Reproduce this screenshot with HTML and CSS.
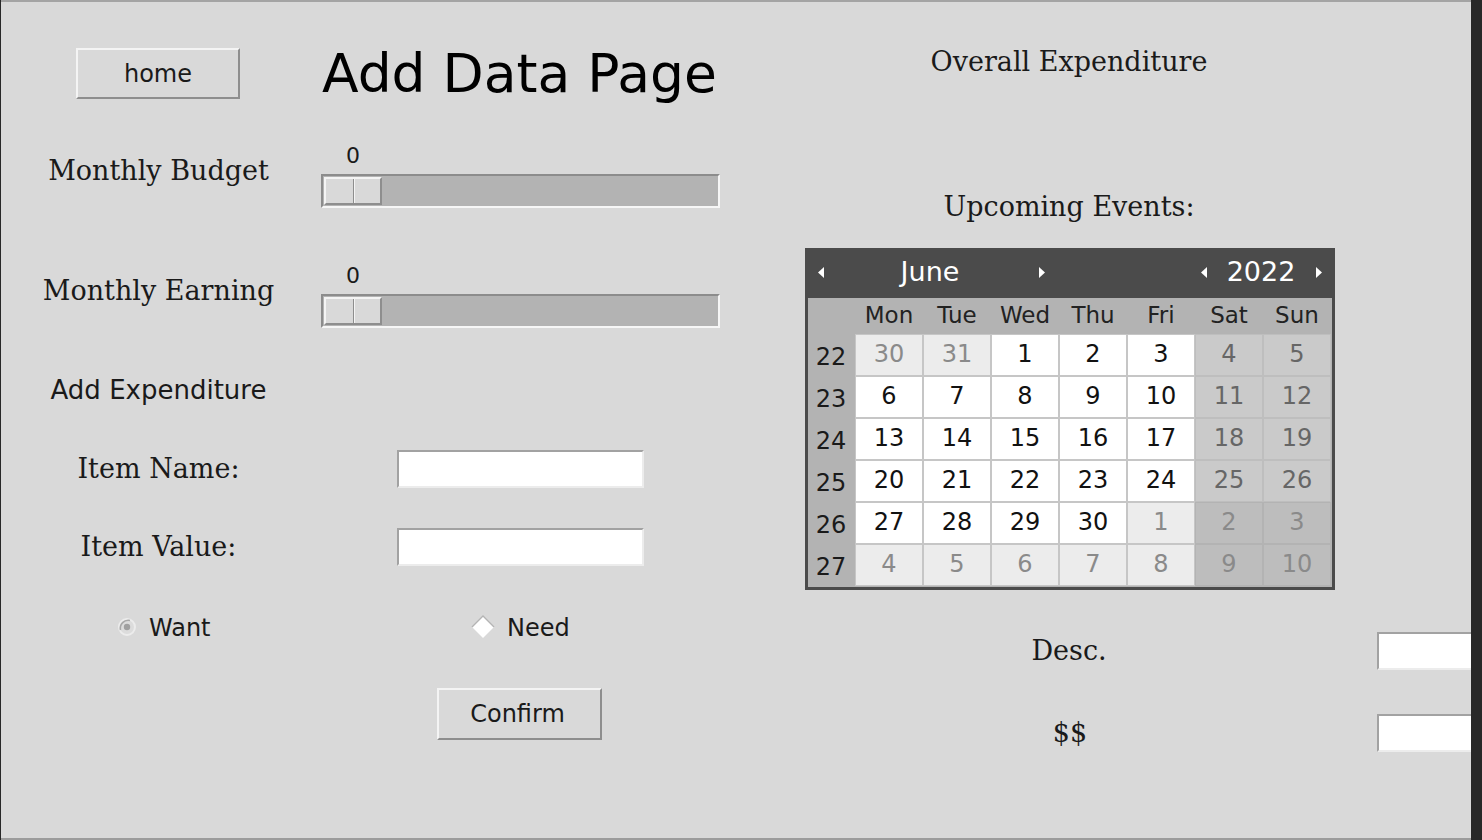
FILE: index.html
```html
<!DOCTYPE html>
<html>
<head>
<meta charset="utf-8">
<link rel="stylesheet" href="styles.css">
</head>
<body>
<div class="window">
  <div class="left">
    <div class="row row-top">
      <div class="btn btn-home">home</div>
      <div class="title">Add Data Page</div>
    </div>

    <div class="row row-slider first">
      <div class="label serif slab">Monthly Budget</div>
      <div class="scale">
        <div class="scale-value">0</div>
        <div class="trough"><div class="handle"></div></div>
      </div>
    </div>

    <div class="row row-slider second">
      <div class="label serif slab">Monthly Earning</div>
      <div class="scale">
        <div class="scale-value">0</div>
        <div class="trough"><div class="handle"></div></div>
      </div>
    </div>

    <div class="row row-heading">
      <div class="label sans heading">Add Expenditure</div>
    </div>

    <div class="row row-entry name">
      <div class="label serif">Item Name:</div>
      <div class="entry"></div>
    </div>

    <div class="row row-entry value">
      <div class="label serif">Item Value:</div>
      <div class="entry"></div>
    </div>

    <div class="row row-radio">
      <div class="radio want">
        <svg class="ind-circle" width="20" height="20" viewBox="0 0 20 20">
          <circle cx="10" cy="10" r="8" fill="#dcdcdc" stroke="#ececec" stroke-width="2"/>
          <path d="M3.5 13 A8 8 0 0 1 13 3.5" fill="none" stroke="#a8a8a8" stroke-width="1.6"/>
          <circle cx="10" cy="10" r="3.2" fill="#a0a0a0"/>
        </svg>
        <span>Want</span>
      </div>
      <div class="radio need">
        <svg class="ind-diamond" width="24" height="24" viewBox="0 0 24 24">
          <polygon points="12,1 23,12 12,23 1,12" fill="#ffffff"/>
          <polyline points="1,12 12,1 23,12" fill="none" stroke="#b4b4b4" stroke-width="1.4"/>
        </svg>
        <span>Need</span>
      </div>
    </div>

    <div class="row row-confirm">
      <div class="btn btn-confirm">Confirm</div>
    </div>
  </div>

  <div class="right">
    <div class="rlabel serif">Overall Expenditure</div>
    <div class="rlabel serif events">Upcoming Events:</div>

    <div class="calendar">
      <div class="cal-head">
        <div class="arr arr-a"><svg width="7" height="11" viewBox="0 0 7 11"><polygon points="7,0 7,11 1,5.5" fill="#fff"/></svg></div>
        <div class="cal-month">June</div>
        <div class="arr arr-b"><svg width="7" height="11" viewBox="0 0 7 11"><polygon points="0,0 0,11 6,5.5" fill="#fff"/></svg></div>
        <div class="cal-spacer"></div>
        <div class="arr arr-c"><svg width="7" height="11" viewBox="0 0 7 11"><polygon points="7,0 7,11 1,5.5" fill="#fff"/></svg></div>
        <div class="cal-year">2022</div>
        <div class="arr arr-d"><svg width="7" height="11" viewBox="0 0 7 11"><polygon points="0,0 0,11 6,5.5" fill="#fff"/></svg></div>
      </div>
      <div class="cal-grid">
        <div class="dn"></div>
        <div class="dn">Mon</div><div class="dn">Tue</div><div class="dn">Wed</div><div class="dn">Thu</div><div class="dn">Fri</div><div class="dn">Sat</div><div class="dn">Sun</div>

        <div class="wk">22</div>
        <div class="d om">30</div><div class="d om">31</div><div class="d">1</div><div class="d">2</div><div class="d">3</div><div class="d we">4</div><div class="d we">5</div>

        <div class="wk">23</div>
        <div class="d">6</div><div class="d">7</div><div class="d">8</div><div class="d">9</div><div class="d">10</div><div class="d we">11</div><div class="d we">12</div>

        <div class="wk">24</div>
        <div class="d">13</div><div class="d">14</div><div class="d">15</div><div class="d">16</div><div class="d">17</div><div class="d we">18</div><div class="d we">19</div>

        <div class="wk">25</div>
        <div class="d">20</div><div class="d">21</div><div class="d">22</div><div class="d">23</div><div class="d">24</div><div class="d we">25</div><div class="d we">26</div>

        <div class="wk">26</div>
        <div class="d">27</div><div class="d">28</div><div class="d">29</div><div class="d">30</div><div class="d om">1</div><div class="d owe">2</div><div class="d owe">3</div>

        <div class="wk">27</div>
        <div class="d om">4</div><div class="d om">5</div><div class="d om">6</div><div class="d om">7</div><div class="d om">8</div><div class="d owe">9</div><div class="d owe">10</div>
      </div>
    </div>

    <div class="rrow desc">
      <div class="rcell serif">Desc.</div>
      <div class="entry wide"></div>
    </div>
    <div class="rrow money">
      <div class="rcell serif">$$</div>
      <div class="entry wide"></div>
    </div>
  </div>
</div>
</body>
</html>
```

FILE: styles.css
```css
html, body {
  margin: 0;
  padding: 0;
  background: #282828;
  overflow: hidden;
}

.window {
  margin-left: 1px;
  width: 1470px;
  height: 836px;
  border-top: 2px solid #a4a4a4;
  border-bottom: 2px solid #9c9c9c;
  background: #d9d9d9;
  display: flex;
  overflow: hidden;
  color: #1a1a1a;
}

.serif { font-family: "DejaVu Serif", "Liberation Serif", serif; font-size: 27px; }
.sans { font-family: "DejaVu Sans", "Liberation Sans", sans-serif; }

/* ---------- left panel ---------- */
.left {
  width: 758px;
  flex-shrink: 0;
  padding-top: 46px;
  display: flex;
  flex-direction: column;
}

.row { display: flex; align-items: flex-start; }

.row-top { height: 51px; align-items: center; }

.btn {
  box-sizing: border-box;
  font-family: "DejaVu Sans", "Liberation Sans", sans-serif;
  font-size: 24px;
  color: #1a1a1a;
  background: #d9d9d9;
  border-top: 2px solid #f4f4f4;
  border-left: 2px solid #f4f4f4;
  border-bottom: 2px solid #8e8e8e;
  border-right: 2px solid #8e8e8e;
  display: flex;
  align-items: center;
  justify-content: center;
}

.btn-home { margin-left: 75px; width: 164px; height: 51px; }

.title {
  margin-left: 82px;
  font-family: "DejaVu Sans", "Liberation Sans", sans-serif;
  font-size: 53.5px;
  line-height: 51px;
  color: #000;
  white-space: nowrap;
}

.label {
  width: 315px;
  flex-shrink: 0;
  text-align: center;
  line-height: 28px;
  white-space: nowrap;
}

.row-slider.first { margin-top: 44px; }
.row-slider.second { margin-top: 55px; }
.row-slider .label { margin-top: 14px; }

.scale { margin-left: 5px; display: flex; flex-direction: column; }
.scale-value {
  width: 64px;
  text-align: center;
  font-family: "DejaVu Sans", "Liberation Sans", sans-serif;
  font-size: 22px;
  line-height: 24px;
  padding-top: 1px;
  height: 23px;
  color: #1a1a1a;
}
.trough {
  margin-top: 7px;
  box-sizing: border-box;
  width: 399px;
  height: 34px;
  background: #b3b3b3;
  border-top: 2px solid #8c8c8c;
  border-left: 2px solid #8c8c8c;
  border-bottom: 2px solid #f6f6f6;
  border-right: 2px solid #f6f6f6;
  padding: 1px;
}
.handle {
  box-sizing: border-box;
  width: 58px;
  height: 28px;
  background:
    linear-gradient(to right, transparent 27px, #8e8e8e 27px, #8e8e8e 28px, #f4f4f4 28px, #f4f4f4 29px, transparent 29px),
    #d9d9d9;
  border-top: 2px solid #f4f4f4;
  border-left: 2px solid #f4f4f4;
  border-bottom: 2px solid #8e8e8e;
  border-right: 2px solid #8e8e8e;
}

.row-heading { margin-top: 48px; }
.heading { font-size: 26px; }

.row-entry { height: 38px; align-items: center; }
.row-entry.name { margin-top: 46px; }
.row-entry.value { margin-top: 40px; }

.entry {
  box-sizing: border-box;
  margin-left: 81px;
  width: 247px;
  height: 38px;
  background: #ffffff;
  border-top: 2px solid #a2a2a2;
  border-left: 2px solid #a2a2a2;
  border-bottom: 2px solid #ececec;
  border-right: 2px solid #ececec;
  flex-shrink: 0;
}

.row-radio { margin-top: 47px; height: 28px; align-items: center; }
.radio {
  display: flex;
  align-items: center;
  font-family: "DejaVu Sans", "Liberation Sans", sans-serif;
  font-size: 24px;
  line-height: 28px;
  color: #1a1a1a;
}
.radio span { padding-top: 2px; }
.radio.want { margin-left: 116px; width: 354px; gap: 12px; }
.radio.need { gap: 12px; }
.ind-circle, .ind-diamond { display: block; flex-shrink: 0; }

.row-confirm { margin-top: 47px; }
.btn-confirm { margin-left: 436px; width: 165px; height: 52px; padding-right: 4px; }

/* ---------- right panel ---------- */
.right {
  margin-left: 46px;
  width: 530px;
  flex-shrink: 0;
  padding-top: 46px;
  display: flex;
  flex-direction: column;
}

.rlabel {
  text-align: center;
  line-height: 28px;
  white-space: nowrap;
  margin-right: 2px;
}
.rlabel.events { margin-top: 117px; }

.calendar {
  margin-top: 27px;
  box-sizing: border-box;
  width: 530px;
  height: 342px;
  border: 3px solid #4b4b4b;
  background: #b3b3b3;
  font-family: "DejaVu Sans", "Liberation Sans", sans-serif;
}

.cal-head {
  box-sizing: border-box;
  height: 47px;
  padding-bottom: 6px;
  background: #4b4b4b;
  display: flex;
  align-items: center;
  color: #ffffff;
  font-size: 27px;
}
.arr { display: flex; align-items: center; justify-content: center; height: 41px; padding-top: 2px; box-sizing: border-box; }
.arr svg { display: block; }
.arr-a { width: 24px; }
.cal-month { width: 196px; text-align: center; }
.arr-b { width: 28px; }
.cal-spacer { flex: 1; }
.arr-c { width: 26px; }
.cal-year { width: 90px; text-align: center; }
.arr-d { width: 26px; }

.cal-grid {
  display: grid;
  grid-template-columns: 46px repeat(7, 66px);
  grid-template-rows: 35px repeat(6, 40px);
  column-gap: 2px;
  row-gap: 2px;
  padding: 0 2px 2px 0;
}

.dn {
  display: flex;
  align-items: center;
  justify-content: center;
  font-size: 23px;
  color: #222;
  padding-bottom: 1px;
}
.wk {
  display: flex;
  align-items: center;
  justify-content: center;
  font-size: 24px;
  color: #1a1a1a;
  padding-top: 3px;
}
.d {
  display: flex;
  align-items: center;
  justify-content: center;
  font-size: 24px;
  padding-bottom: 3px;
  background: #ffffff;
  color: #111;
  box-shadow: 0 0 0 1px #c6c6c6;
}
.d.om { background: #ececec; color: #8a8a8a; }
.d.we { background: #cacaca; color: #666; box-shadow: 0 0 0 1px #bebebe; }
.d.owe { background: #bdbdbd; color: #8a8a8a; box-shadow: 0 0 0 1px #b3b3b3; }

.rrow { display: flex; align-items: center; height: 38px; }
.rrow.desc { margin-top: 42px; }
.rrow.money { margin-top: 44px; }
.rcell { width: 530px; flex-shrink: 0; text-align: center; line-height: 28px; }
.rrow .entry.wide { margin-left: 42px; width: 200px; }
.rrow.desc .rcell { padding-right: 2px; box-sizing: border-box; }
```
